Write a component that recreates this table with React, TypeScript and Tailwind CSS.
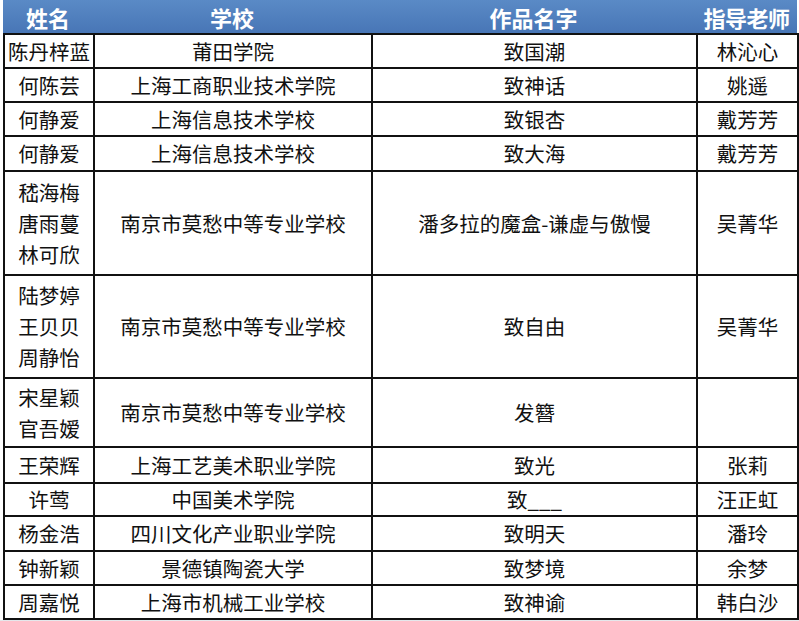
import React from 'react';

type Row = { names: string[]; school: string; work: string; teacher: string; h: string };

const rows: Row[] = [
  { names: ['陈丹梓蓝'], school: '莆田学院', work: '致国潮', teacher: '林沁心', h: 'h-[34px]' },
  { names: ['何陈芸'], school: '上海工商职业技术学院', work: '致神话', teacher: '姚遥', h: 'h-[34px]' },
  { names: ['何静爱'], school: '上海信息技术学校', work: '致银杏', teacher: '戴芳芳', h: 'h-[34px]' },
  { names: ['何静爱'], school: '上海信息技术学校', work: '致大海', teacher: '戴芳芳', h: 'h-[35px]' },
  { names: ['嵇海梅', '唐雨蔓', '林可欣'], school: '南京市莫愁中等专业学校', work: '潘多拉的魔盒-谦虚与傲慢', teacher: '吴菁华', h: 'h-[104px]' },
  { names: ['陆梦婷', '王贝贝', '周静怡'], school: '南京市莫愁中等专业学校', work: '致自由', teacher: '吴菁华', h: 'h-[103px]' },
  { names: ['宋星颖', '官吾嫒'], school: '南京市莫愁中等专业学校', work: '发簪', teacher: '', h: 'h-[69px]' },
  { names: ['王荣辉'], school: '上海工艺美术职业学院', work: '致光', teacher: '张莉', h: 'h-[36px]' },
  { names: ['许莺'], school: '中国美术学院', work: '致___', teacher: '汪正虹', h: 'h-[33px]' },
  { names: ['杨金浩'], school: '四川文化产业职业学院', work: '致明天', teacher: '潘玲', h: 'h-[35px]' },
  { names: ['钟新颖'], school: '景德镇陶瓷大学', work: '致梦境', teacher: '余梦', h: 'h-[34px]' },
  { names: ['周嘉悦'], school: '上海市机械工业学校', work: '致神谕', teacher: '韩白沙', h: 'h-[34px]' },
];

const cell = 'border-2 border-[#111] text-center align-middle p-0';

export default function App() {
  return (
    <div
      className="w-[799px] h-[621px] bg-[#e4e7eb] overflow-hidden text-[#111]"
      style={{ fontFamily: '"Noto Sans CJK SC", "Microsoft YaHei", sans-serif' }}
    >
      <div className="bg-white pl-[3px] pr-[2px]">
        <div className="grid grid-cols-[90px_278px_325px_101px] h-[33px] items-center bg-gradient-to-b from-[#5a8ac6] to-[#4876b6] text-white font-bold text-[22px] leading-none">
          <div className="text-center">姓名</div>
          <div className="text-center">学校</div>
          <div className="text-center">作品名字</div>
          <div className="text-center tracking-[-0.5px]">指导老师</div>
        </div>
        <table className="table-fixed border-collapse w-[794px] text-[20.5px]">
          <colgroup>
            <col className="w-[90px]" />
            <col className="w-[278px]" />
            <col className="w-[325px]" />
            <col className="w-[101px]" />
          </colgroup>
          <tbody>
            {rows.map((r, i) => (
              <tr key={i} className={r.h}>
                <td className={`${cell} leading-[31px]`}>
                  {r.names.map((n) => (
                    <div key={n} className="whitespace-nowrap">{n}</div>
                  ))}
                </td>
                <td className={cell}>{r.school}</td>
                <td className={cell}>{r.work}</td>
                <td className={cell}>{r.teacher}</td>
              </tr>
            ))}
          </tbody>
        </table>
      </div>
    </div>
  );
}
